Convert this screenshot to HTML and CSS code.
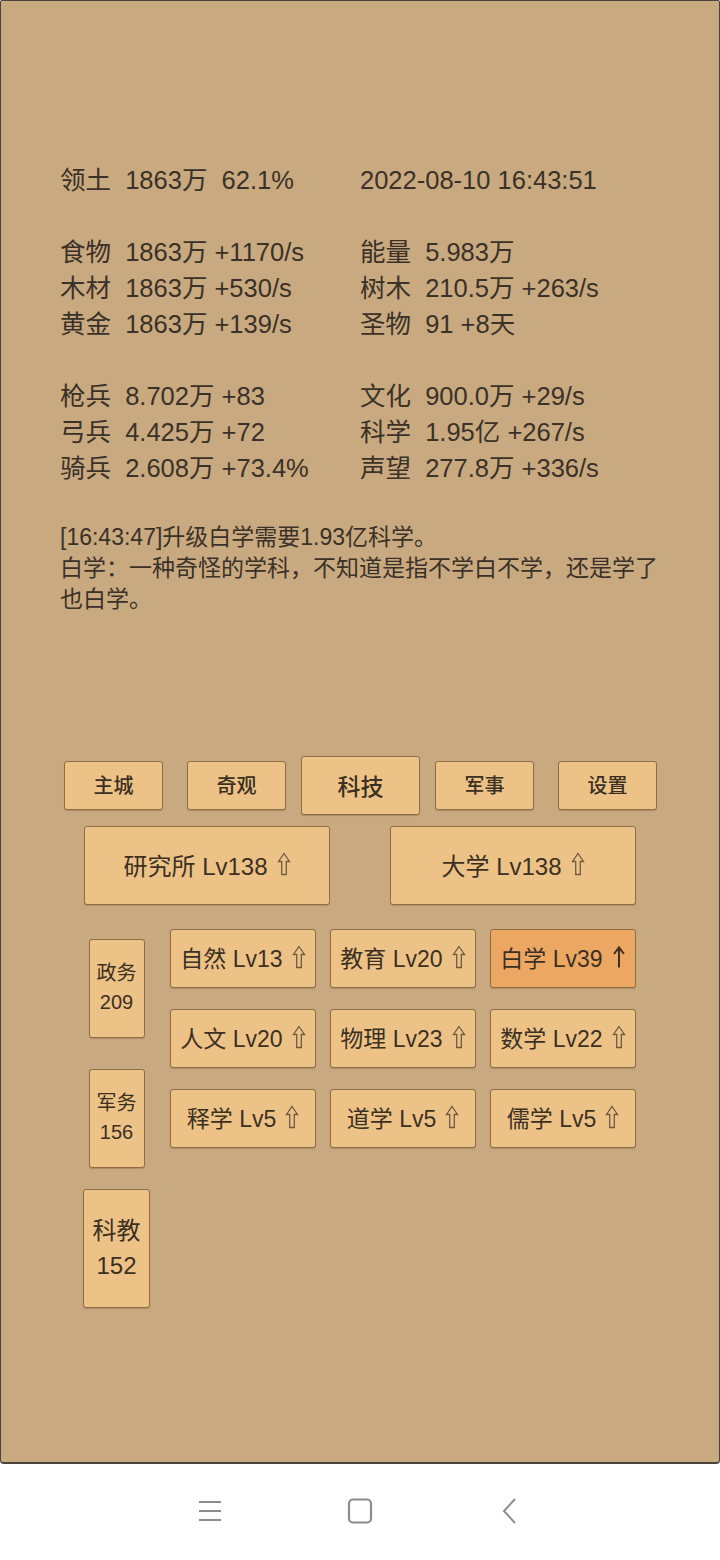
FILE: index.html
```html
<!DOCTYPE html>
<html lang="zh">
<head>
<meta charset="utf-8">
<title>科技</title>
<link rel="stylesheet" href="styles.css">
</head>
<body>
<div class="screen">
  <div class="panel">
    <div class="stats">
      <div class="cell">领土  1863万  62.1%</div><div class="cell">2022-08-10 16:43:51</div>
      <div class="cell"></div><div class="cell"></div>
      <div class="cell">食物  1863万 +1170/s</div><div class="cell">能量  5.983万</div>
      <div class="cell">木材  1863万 +530/s</div><div class="cell">树木  210.5万 +263/s</div>
      <div class="cell">黄金  1863万 +139/s</div><div class="cell">圣物  91 +8天</div>
      <div class="cell"></div><div class="cell"></div>
      <div class="cell">枪兵  8.702万 +83</div><div class="cell">文化  900.0万 +29/s</div>
      <div class="cell">弓兵  4.425万 +72</div><div class="cell">科学  1.95亿 +267/s</div>
      <div class="cell">骑兵  2.608万 +73.4%</div><div class="cell">声望  277.8万 +336/s</div>
      <div class="cell"></div><div class="cell"></div>
    </div>
    <div class="log">
      <p>[16:43:47]升级白学需要1.93亿科学。</p>
      <p>白学：一种奇怪的学科，不知道是指不学白不学，还是学了也白学。</p>
    </div>

    <div class="tabs">
      <div class="btn tab t1">主城</div>
      <div class="btn tab t2">奇观</div>
      <div class="btn tab tab-active t3">科技</div>
      <div class="btn tab t4">军事</div>
      <div class="btn tab t5">设置</div>
    </div>

    <div class="buildings">
      <div class="btn building"><span>研究所 Lv138</span><svg class="up" viewBox="0 0 14 24"><path d="M7 1.5L12.5 9.5H9.3V22.5H4.7V9.5H1.5Z"/></svg></div>
      <div class="btn building"><span>大学 Lv138</span><svg class="up" viewBox="0 0 14 24"><path d="M7 1.5L12.5 9.5H9.3V22.5H4.7V9.5H1.5Z"/></svg></div>
    </div>

    <div class="lower">
      <div class="side">
        <div class="btn side-btn">政务<br>209</div>
        <div class="btn side-btn s2">军务<br>156</div>
        <div class="btn side-btn side-active">科教<br>152</div>
      </div>
      <div class="grid">
        <div class="btn tech"><span>自然 Lv13</span><svg class="up" viewBox="0 0 14 24"><path d="M7 1.5L12.5 9.5H9.3V22.5H4.7V9.5H1.5Z"/></svg></div>
        <div class="btn tech"><span>教育 Lv20</span><svg class="up" viewBox="0 0 14 24"><path d="M7 1.5L12.5 9.5H9.3V22.5H4.7V9.5H1.5Z"/></svg></div>
        <div class="btn tech tech-hot"><span>白学 Lv39</span><svg class="up2" viewBox="0 0 14 24"><path d="M7 2.5V22.5M2 9L7 2.5L12 9"/></svg></div>
        <div class="btn tech"><span>人文 Lv20</span><svg class="up" viewBox="0 0 14 24"><path d="M7 1.5L12.5 9.5H9.3V22.5H4.7V9.5H1.5Z"/></svg></div>
        <div class="btn tech"><span>物理 Lv23</span><svg class="up" viewBox="0 0 14 24"><path d="M7 1.5L12.5 9.5H9.3V22.5H4.7V9.5H1.5Z"/></svg></div>
        <div class="btn tech"><span>数学 Lv22</span><svg class="up" viewBox="0 0 14 24"><path d="M7 1.5L12.5 9.5H9.3V22.5H4.7V9.5H1.5Z"/></svg></div>
        <div class="btn tech"><span>释学 Lv5</span><svg class="up" viewBox="0 0 14 24"><path d="M7 1.5L12.5 9.5H9.3V22.5H4.7V9.5H1.5Z"/></svg></div>
        <div class="btn tech"><span>道学 Lv5</span><svg class="up" viewBox="0 0 14 24"><path d="M7 1.5L12.5 9.5H9.3V22.5H4.7V9.5H1.5Z"/></svg></div>
        <div class="btn tech"><span>儒学 Lv5</span><svg class="up" viewBox="0 0 14 24"><path d="M7 1.5L12.5 9.5H9.3V22.5H4.7V9.5H1.5Z"/></svg></div>
      </div>
    </div>
  </div>

  <div class="navbar">
    <svg class="nav-icon" width="26" height="26" viewBox="0 0 26 26">
      <path d="M2 4H24M2 13H24M2 22H24" stroke="#8c8c8c" stroke-width="2" fill="none"/>
    </svg>
    <svg class="nav-icon" width="26" height="26" viewBox="0 0 26 26">
      <rect x="2" y="1.5" width="22" height="23" rx="4" stroke="#8c8c8c" stroke-width="2.2" fill="none"/>
    </svg>
    <svg class="nav-icon" width="26" height="26" viewBox="0 0 26 26">
      <path d="M18 1L7 13L18 25" stroke="#8c8c8c" stroke-width="2" fill="none"/>
    </svg>
  </div>
</div>
</body>
</html>
```

FILE: styles.css
```css
* { box-sizing: border-box; }

html, body {
  margin: 0;
  padding: 0;
  background: #ffffff;
}

body {
  font-family: "Liberation Sans", "Noto Sans CJK SC", sans-serif;
  color: #3a3128;
}

.screen {
  width: 720px;
  height: 1560px;
  display: flex;
  flex-direction: column;
}

.panel {
  height: 1464px;
  background: #c9a97f;
  border: 1px solid #47433d;
  border-bottom-width: 2px;
  border-radius: 2px 2px 4px 4px;
  padding-top: 161px;
}

.stats {
  display: grid;
  grid-template-columns: 300px 300px;
  padding-left: 59px;
  font-size: 25.5px;
  line-height: 36px;
}

.cell {
  white-space: pre;
  height: 36px;
}

.log {
  padding-left: 59px;
  width: 660px;
  font-size: 23px;
  line-height: 31px;
}

.log p { margin: 0; }

.btn {
  background: #edc287;
  border: 1px solid #8f6d45;
  border-radius: 3px;
  color: #3b3022;
  display: flex;
  align-items: center;
  justify-content: center;
  text-align: center;
  white-space: pre;
  box-shadow: 0 1px 1px rgba(90, 60, 30, 0.25);
}

.tabs {
  display: flex;
  align-items: center;
  margin-top: 141px;
  padding-left: 63px;
  height: 58px;
}

.tab {
  width: 99px;
  height: 49px;
  font-size: 20px;
  font-weight: 500;
  padding-bottom: 1px;
}

.t2 { margin-left: 24px; }
.t3 { margin-left: 15px; }
.t4 { margin-left: 15px; }
.t5 { margin-left: 24px; }

.tab-active {
  width: 119px;
  height: 59px;
  font-size: 23px;
  font-weight: 500;
}

.buildings {
  display: flex;
  gap: 60px;
  margin-top: 12px;
  padding-left: 83px;
}

.building {
  width: 246px;
  height: 79px;
  font-size: 24px;
  padding-bottom: 3px;
}

.up {
  width: 14px;
  height: 24px;
  margin-left: 9px;
  fill: none;
  stroke: #6e5b43;
  stroke-width: 1.3;
  stroke-linejoin: miter;
}

.up2 {
  width: 14px;
  height: 24px;
  margin-left: 9px;
  fill: none;
  stroke: #3b3022;
  stroke-width: 2;
}

.lower {
  display: flex;
  margin-top: 24px;
  padding-left: 82px;
}

.side {
  width: 67px;
  display: flex;
  flex-direction: column;
  align-items: center;
  padding-top: 10px;
}

.side-btn {
  width: 56px;
  height: 99px;
  font-size: 20px;
  line-height: 29px;
  padding-bottom: 2px;
}

.s2 { margin-top: 31px; }

.side-active {
  width: 67px;
  height: 119px;
  font-size: 24px;
  line-height: 35px;
  margin-top: 21px;
}

.grid {
  margin-left: 20px;
  display: grid;
  grid-template-columns: repeat(3, 146px);
  grid-auto-rows: 59px;
  column-gap: 14px;
  row-gap: 21px;
}

.tech {
  font-size: 23px;
  padding-bottom: 3px;
}

.tech-hot {
  background: #eca862;
}

.navbar {
  flex: 1;
  background: #ffffff;
  display: flex;
  align-items: center;
  justify-content: center;
  gap: 124px;
  padding-bottom: 2px;
}
```
